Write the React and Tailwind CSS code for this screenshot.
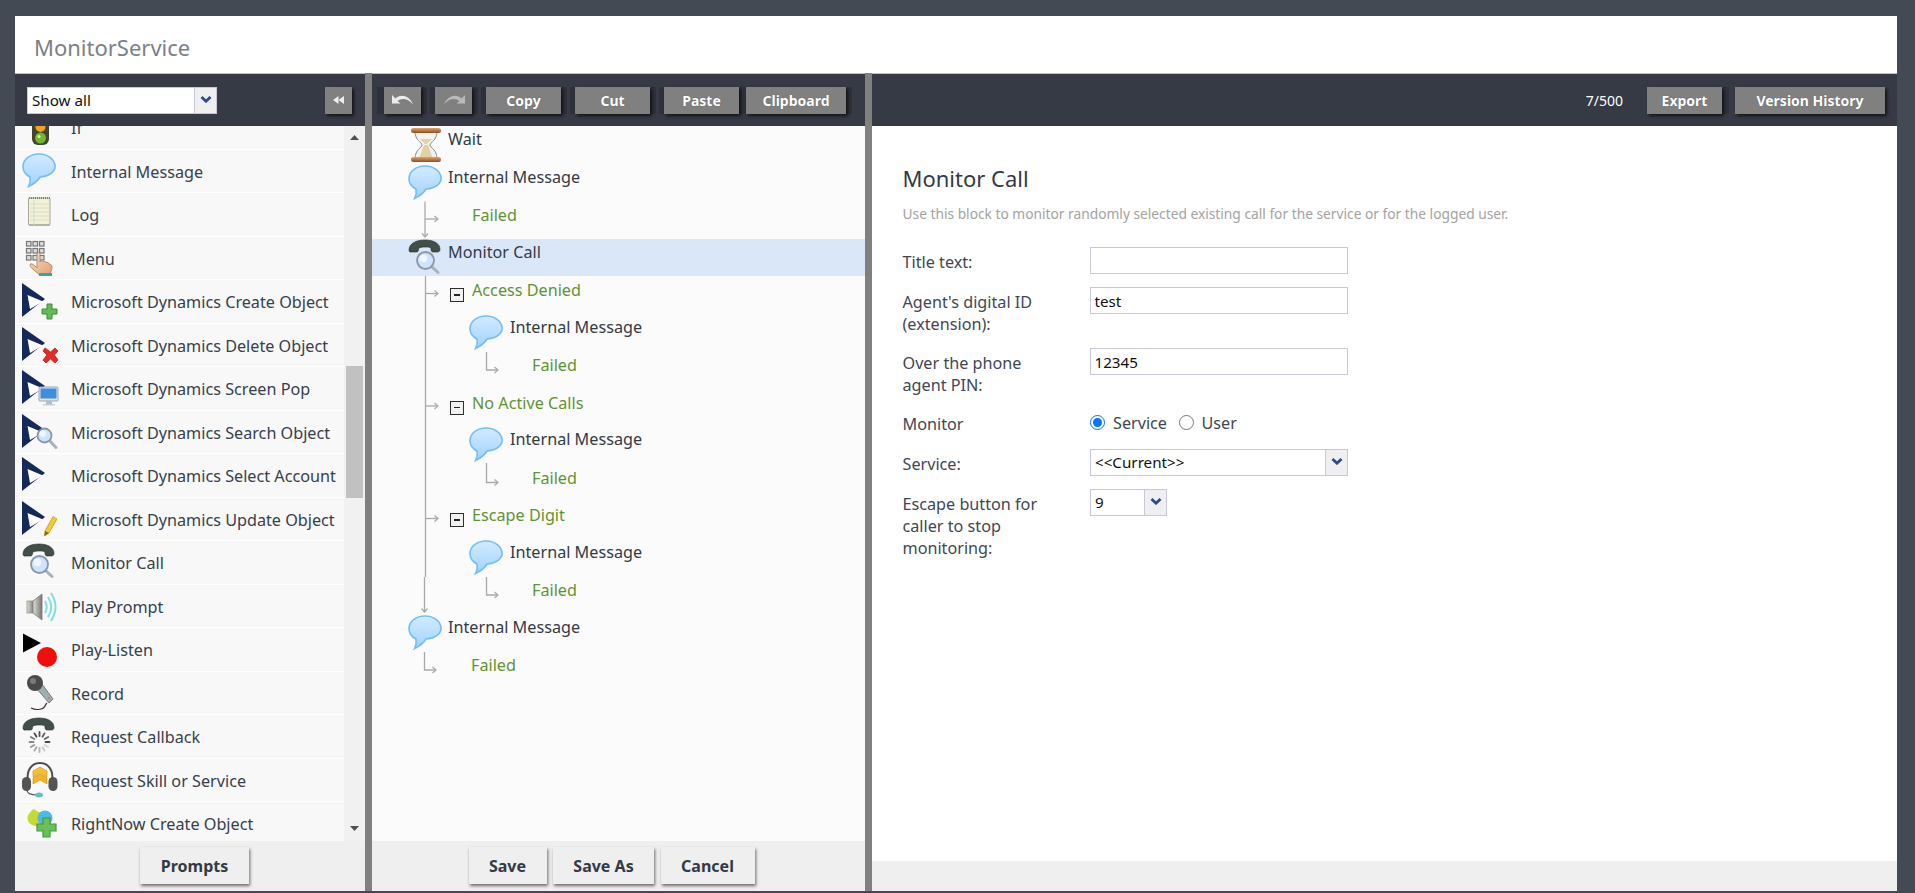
import React from "react";

const Defs = () => (
  <svg width="0" height="0" className="absolute">
    <defs>
      <linearGradient id="bub" x1="0" y1="0" x2="0" y2="1">
        <stop offset="0" stopColor="#d3ebff" />
        <stop offset="1" stopColor="#9fd3ff" />
      </linearGradient>
      <linearGradient id="skin" x1="0" y1="0" x2="1" y2="1">
        <stop offset="0" stopColor="#f8dcc0" />
        <stop offset="1" stopColor="#dda37a" />
      </linearGradient>
      <linearGradient id="brown" x1="0" y1="0" x2="0" y2="1">
        <stop offset="0" stopColor="#e0a26a" />
        <stop offset="1" stopColor="#8f4f1f" />
      </linearGradient>
      <linearGradient id="spk" x1="0" y1="0" x2="1" y2="0">
        <stop offset="0" stopColor="#e0e0da" />
        <stop offset="1" stopColor="#76766f" />
      </linearGradient>
    </defs>
  </svg>
);

const Box = ({ children, className = "" }) => (
  <svg viewBox="0 0 36 36" className={`w-[36px] h-[36px] shrink-0 overflow-visible ${className}`}>{children}</svg>
);

const BubbleShape = () => (
  <>
    <path d="M17 1C8 1 1 6.500 1 13.600c0 4.600 2.800 8.400 7 10.400 .6 3 .2 6-1.400 9.500 5-2.500 9-5.500 11.500-9.500 8.500-.3 15-5.300 15-10.400C33 6.500 26 1 17 1Z" fill="url(#bub)" stroke="#74bdfb" strokeWidth="1.600" />
  </>
);
const Bubble = () => <Box><BubbleShape /></Box>;

const Lights = () => (
  <Box>
    <rect x="10" y="0" width="17" height="36" rx="6" fill="#45452f" />
    <circle cx="18.500" cy="7" r="5" fill="#c33" />
    <circle cx="18.500" cy="18" r="5" fill="#efa321" />
    <circle cx="18.500" cy="29" r="5.500" fill="#72b52e" />
    <circle cx="17" cy="27.500" r="1.600" fill="#d9f5a8" />
  </Box>
);

const Log = () => (
  <Box>
    <rect x="6.500" y="2" width="21.500" height="27" rx="1" fill="#f3f1d8" stroke="#a9a992" />
    <rect x="7" y="28" width="21" height="2" fill="#b5b5a0" />
    <path d="M7 2h21" stroke="#666" strokeWidth="1.500" strokeDasharray="1 1" />
    <path d="M8 8h19M8 12h19M8 16h19M8 20h19M8 24h19" stroke="#dcdcc0" strokeWidth="1" />
    <path d="M12 4v25" stroke="#c4e0dc" strokeWidth="1" />
  </Box>
);

const Menu = () => (
  <Box>
    {[0, 1, 2].map((r) => [0, 1, 2].map((c) => (
      <rect key={`${r}${c}`} x={4.500 + c * 6.500} y={1.500 + r * 7} width="4.500" height="4.500" fill="#dedede" stroke="#777" strokeWidth="1.200" />
    )))}
    <path d="M15 14c0-2 3-2 3 0v8c1-2 3-1 3 0 1-1 3-.5 3 .5 1-.5 3 0 3 1.500 1 0 3 1 3 2.500 0 3-1 6-3 8H17c-3-3-8-6-9-9-.5-2 2-2 3-1l4 3Z" fill="url(#skin)" stroke="#b37b55" strokeWidth=".8" />
    <rect x="17" y="33" width="13" height="3" fill="#3aa5a0" />
  </Box>
);

const Dyn = () => (
  <>
    <path d="M0 0 23 16 0 34Z" fill="#14285a" />
    <path d="M5.500 12 21 18.500 8 26Z" fill="#fff" />
  </>
);

const Magnifier = ({ cx, cy, r, lx, ly }) => (
  <>
    <path d={`M${cx + r * 0.7} ${cy + r * 0.7}L${lx} ${ly}`} stroke="#a9b2ba" strokeWidth="3" strokeLinecap="round" />
    <circle cx={cx} cy={cy} r={r} fill="#cfe4f8" stroke="#8698aa" strokeWidth="1.800" />
    <circle cx={cx - r * 0.25} cy={cy - r * 0.25} r={r * 0.45} fill="#eef7ff" />
  </>
);

const DynCreate = () => (
  <Box><Dyn /><path d="M25 21h5v5h5v5h-5v5h-5v-5h-5v-5h5Z" fill="#63bb55" stroke="#3d8a37" strokeWidth="1" /></Box>
);
const DynDelete = () => (
  <Box><Dyn /><path d="M23 21 28.500 25 33 21 36 24 32.500 28 36 33 33 36 28.500 32 24 36 21 33 25 28 21 24Z" fill="#e32b2b" stroke="#b81f1f" strokeWidth=".8" /></Box>
);
const DynScreen = () => (
  <Box>
    <Dyn />
    <rect x="17" y="17" width="19" height="14" rx="1" fill="#dde3e8" stroke="#9ea7ad" />
    <rect x="18.500" y="18.500" width="16" height="10" fill="#3d8ee0" />
    <rect x="24" y="31" width="6" height="3" fill="#b6bcc1" />
    <rect x="21" y="34" width="12" height="1.500" fill="#c9ced2" />
  </Box>
);
const DynSearch = () => (<Box><Dyn /><Magnifier cx={22.500} cy={21.500} r={7} lx={34} ly={33.500} /></Box>);
const DynSelect = () => (<Box><Dyn /></Box>);
const DynUpdate = () => (
  <Box>
    <Dyn />
    <path d="M31 15.500 35 18 27 32 22.500 35 23 30Z" fill="#f0cb34" stroke="#c79e1e" strokeWidth=".8" />
    <path d="M23 30 22.500 35 27 32Z" fill="#7a6a3a" />
  </Box>
);

const Handset = () => (
  <path d="M1 10C1 3 9 0 17 0s15 3 15 9.500c0 1.500-1 2.500-2.500 2.500H25c-1.500 0-2-1-2-3 0-1.500-1-2-6-2s-6.500 1-6.500 2.500c0 2-1 2.500-2.500 2.500H3.500C2 12.500 1 11.500 1 10Z" fill="#414f48" stroke="#232b27" strokeWidth=".6" />
);

const MonitorIcon = () => (
  <Box>
    <Handset />
    <Magnifier cx={17.500} cy={20.500} r={8.500} lx={30} ly={32.500} />
  </Box>
);

const Prompt = () => (
  <Box>
    <rect x="5" y="13" width="7" height="12" fill="url(#spk)" stroke="#8a8a82" strokeWidth=".7" />
    <path d="M11 13 20 6V32L11 25Z" fill="url(#spk)" stroke="#777" strokeWidth=".8" />
    <path d="M23 13q3.500 6 0 12M26 9q6.500 10 0 20M29 5q9 14 0 28" fill="none" stroke="#86dde0" strokeWidth="2" />
  </Box>
);

const PlayListen = () => (
  <Box>
    <path d="M1 2.500 19 12 1 21.500Z" fill="#000" />
    <circle cx="25" cy="26" r="10" fill="#f40d0d" />
  </Box>
);

const Record = () => (
  <Box>
    <path d="M9 33c6 3 13 1 14-2 .4-1 1-2 2-3" fill="none" stroke="#333" strokeWidth="1.200" />
    <path d="M14 13 20 9 31 24 27 28Z" fill="#9db0ad" stroke="#667" strokeWidth=".8" />
    <circle cx="27" cy="23" r="1" fill="#d8803a" />
    <circle cx="13" cy="8" r="8" fill="#4a4a4a" />
    <circle cx="11" cy="6" r="3" fill="#7b7b7b" />
  </Box>
);

const Callback = () => (
  <Box>
    <Handset />
    {[...Array(12)].map((_, i) => {
      const a = (i * Math.PI) / 6;
      const cx = 17.500, cy = 24;
      return <path key={i} d={`M${cx + Math.cos(a) * 6} ${cy + Math.sin(a) * 6}L${cx + Math.cos(a) * 10} ${cy + Math.sin(a) * 10}`} stroke={`rgba(40,40,40,${i >= 8 || i === 0 ? 0.85 - (i % 8) * 0.05 : 0.12 + (i % 8) * 0.07})`} strokeWidth="1.800" strokeLinecap="round" />;
    })}
  </Box>
);

const Skill = () => (
  <Box>
    <path d="M6 19C4 8 10 1 18 1s14 7 12 18" fill="none" stroke="#4d4d4d" strokeWidth="2" />
    <path d="M18 5 25 9v6l-7-4-7 4V9Z" fill="#f5c12e" stroke="#c8901a" strokeWidth=".6" />
    <path d="M18 12 25 16v6l-7-4-7 4v-6Z" fill="#f3b61f" stroke="#c8901a" strokeWidth=".6" />
    <rect x="0" y="15" width="9" height="14" rx="4.500" fill="#545454" />
    <rect x="26.500" y="15" width="9" height="14" rx="4.500" fill="#545454" />
    <path d="M5 28c0 4 5 5 10 5" fill="none" stroke="#555" strokeWidth="1.200" />
    <ellipse cx="17" cy="33" rx="4" ry="2.500" fill="#63bfc7" />
  </Box>
);

const RightNow = () => (
  <Box>
    <path d="M6 0 11 3c3-.5 8 1 8 6 0 6-6 8-10 8s-9-2.500-9-8C0 6 3 2.500 6 0Z" fill="#c4d932" transform="translate(5.500 4)" />
    <circle cx="23" cy="13" r="7.500" fill="#4fb8ea" />
    <path d="M21 13h7v6h6v7h-6v6h-7v-6h-6v-7h6Z" fill="#69c059" stroke="#3f9b3a" strokeWidth="1.200" />
  </Box>
);

const Hourglass = () => (
  <Box>
    <path d="M7 4 C7 14 14 15 14 18 C14 21 7 22 7 32 H29 C29 22 22 21 22 18 C22 15 29 14 29 4Z" fill="#f3f3f0" stroke="#8c8c88" strokeWidth="1" />
    <path d="M16 18h4l4.500 12h-13Z" fill="#e3cfa8" />
    <path d="M12 12h12l-5 5h-2Z" fill="#e3cfa8" />
    <rect x="3" y="1" width="30" height="5" rx="2.500" fill="url(#brown)" />
    <rect x="3" y="30" width="30" height="5" rx="2.500" fill="url(#brown)" />
  </Box>
);

const Chevron = () => (
  <svg viewBox="0 0 12 7" className="w-[12px] h-[7px]">
    <path d="M1.500 1 6 5.200 10.500 1" fill="none" stroke="#2d4a86" strokeWidth="2.800" />
  </svg>
);

const font = "font-['Noto_Sans',sans-serif]";

const items = [
  ["If", Lights],
  ["Internal Message", Bubble],
  ["Log", Log],
  ["Menu", Menu],
  ["Microsoft Dynamics Create Object", DynCreate],
  ["Microsoft Dynamics Delete Object", DynDelete],
  ["Microsoft Dynamics Screen Pop", DynScreen],
  ["Microsoft Dynamics Search Object", DynSearch],
  ["Microsoft Dynamics Select Account", DynSelect],
  ["Microsoft Dynamics Update Object", DynUpdate],
  ["Monitor Call", MonitorIcon],
  ["Play Prompt", Prompt],
  ["Play-Listen", PlayListen],
  ["Record", Record],
  ["Request Callback", Callback],
  ["Request Skill or Service", Skill],
  ["RightNow Create Object", RightNow],
];

const shadow = "shadow-[2px_2px_3px_rgba(0,0,0,0.65)]";

const GrayBtn = ({ w, children }) => (
  <button className={`${w} h-[27px] bg-[#808080] text-white text-[14px] font-bold flex items-center justify-center ${shadow} [text-shadow:0_0_1px_rgba(0,0,0,0.4)]`}>
    {children}
  </button>
);

const Band = ({ className = "", children }) => (
  <div className={`flex h-[27px] bg-[#2e3139] ${className}`}>{children}</div>
);

const LightBtn = ({ w, children }) => (
  <button className={`${w} h-[37px] bg-[#efefef] text-[#333a45] text-[16px] font-bold flex items-center justify-center shadow-[1px_2px_3px_rgba(0,0,0,0.55)]`}>
    {children}
  </button>
);

const Undo = ({ flip }) => (
  <svg viewBox="0 0 24 12" className={`w-[24px] h-[12px] ${flip ? "-scale-x-100" : ""}`}>
    <path d="M1 1V9.500H9.500L6.500 7C11 3.500 17 4.500 22 10.500C19 2.500 10 -1 4.500 4.500Z" fill={flip ? "#b9b9b9" : "#ececec"} />
  </svg>
);

const Connectors = () => {
  const L = "#a9a9a9";
  const right = (x, y) => <path key={`${x}-${y}`} d={`M${x - 3.500} ${y - 3}L${x} ${y}L${x - 3.500} ${y + 3}`} fill="none" stroke={L} strokeWidth="1.200" />;
  const down = (x, y) => <path key={`d${x}-${y}`} d={`M${x - 3} ${y - 3.500}L${x} ${y}L${x + 3} ${y - 3.500}`} fill="none" stroke={L} strokeWidth="1.200" />;
  return (
    <svg className="absolute left-0 top-0 w-[493px] h-[715px] pointer-events-none" viewBox="0 0 493 715">
      <g stroke={L} strokeWidth="1.300" fill="none">
        <path d="M53 75.500V110.500" /><path d="M53 93H65" />
        <path d="M53.500 150V451" /><path d="M52.500 451V485.500" />
        <path d="M53.500 167.500H65" /><path d="M53.500 280H65" /><path d="M53.500 392.500H65" />
        <path d="M114.500 226V244H125" /><path d="M114.500 337V356.500H125" /><path d="M114.500 451V469H125" />
        <path d="M52.500 526V544H63" />
      </g>
      {down(53, 111)}
      {down(52.500, 486)}
      {right(66, 93)}{right(66, 167.500)}{right(66, 280)}{right(66, 392.500)}
      {right(126, 244)}{right(126, 356.500)}{right(126, 469)}{right(64, 544)}
    </svg>
  );
};

const Minus = () => (
  <div className="w-[14px] h-[14px] mt-[12px] mr-[8px] border-[1.500px] border-[#2d2d2d] bg-[#f1f1f1] flex items-center justify-center shrink-0">
    <div className="w-[6px] h-[1.500px] bg-[#222]" />
  </div>
);

const rowH = "h-[37.500px]";
const Node = ({ Icon, text, nested, selected }) => (
  <div className={`${rowH} flex items-start ${nested ? "pl-[97px]" : "pl-[36px]"} ${selected ? "bg-[#d9e7f9]" : ""}`}>
    <div className="mt-[1px]"><Icon /></div>
    <div className={`leading-[28px] -mt-[1px] text-[#333a45] ${nested ? "ml-[5px]" : "ml-[4px]"}`}>{text}</div>
  </div>
);
const Branch = ({ text, pl, minus }) => (
  <div className={`${rowH} flex items-start ${pl}`}>
    {minus && <Minus />}
    <div className="leading-[28px] text-[#5f9433]">{text}</div>
  </div>
);

const Field = ({ label, children }) => (
  <div className="flex pb-[13px]">
    <div className="w-[187.500px] pt-[4px] leading-[22px] text-[#3f4753] shrink-0 pr-[30px]">{label}</div>
    {children}
  </div>
);

const Input = ({ value }) => (
  <input readOnly value={value} className="w-[258px] h-[27px] border border-[#c8c8da] px-[3.500px] text-[15.200px] text-[#111] bg-white outline-none" />
);

const Select = ({ w, text }) => (
  <div className={`${w} h-[27px] border border-[#c8c8da] flex bg-white shrink-0`}>
    <div className="flex-1 px-[4px] leading-[25px] text-[#111] text-[15.200px]">{text}</div>
    <div className="w-[22px] bg-[#efeff1] border-l border-[#c8c8da] flex items-center justify-center pb-[2px]"><Chevron /></div>
  </div>
);

export default function App() {
  return (
    <div className={`${font} h-[893px] w-full bg-[#434a54] pt-[16px] pb-[2px] pl-[15px] pr-[18px] text-[16.200px] overflow-hidden`}>
      <Defs />
      <div className="h-full flex flex-col bg-white">
        <div className="h-[58px] shrink-0 border-b border-[#c0c0c0] pl-[19px] pt-[16px] text-[22px] leading-[30px] text-[#7b8086]">MonitorService</div>
        <div className="flex-1 flex min-h-0">
          {/* left */}
          <div className="w-[350px] flex flex-col shrink-0">
            <div className="h-[52px] bg-[#363a44] flex items-center pl-[12px] pr-[13px] justify-between shrink-0">
              <Select w="w-[190px]" text="Show all" />
              <button className={`w-[27px] h-[27px] bg-[#808080] flex items-center justify-center ${shadow}`}>
                <svg viewBox="0 0 11 8" className="w-[11px] h-[8px]"><path d="M5.500 0V8L0 4ZM11 0V8L5.500 4Z" fill="#eee" /></svg>
              </button>
            </div>
            <div className="flex-1 flex min-h-0 bg-[#f8f8f8]">
              <div className="flex-1 overflow-hidden">
                <div className="-mt-[20px]">
                  {items.map(([t, I]) => (
                    <div key={t} className="h-[43.500px] border-b border-white flex items-center pl-[7px] gap-[13px] text-[#37404c]">
                      <I />
                      <span className="mt-[2px]">{t}</span>
                    </div>
                  ))}
                </div>
              </div>
              <div className="w-[21px] shrink-0 bg-[#f1f1f1] flex flex-col items-center">
                <svg viewBox="0 0 9 5" className="w-[9px] h-[5px] mt-[9px] shrink-0"><path d="M0 5 4.500 0 9 5Z" fill="#505050" /></svg>
                <div className="w-[17px] h-[132px] bg-[#c1c1c1] mt-[226px] shrink-0" />
                <svg viewBox="0 0 9 5" className="w-[9px] h-[5px] mt-auto mb-[10px] shrink-0"><path d="M0 0 4.500 5 9 0Z" fill="#505050" /></svg>
              </div>
            </div>
            <div className="h-[50px] bg-[#efefef] flex justify-center pt-[6px] pl-[9px] shrink-0">
              <LightBtn w="w-[109px]">Prompts</LightBtn>
            </div>
          </div>
          <div className="w-[7px] bg-[#808080] shrink-0 -mt-px" />
          {/* middle */}
          <div className="w-[493px] flex flex-col shrink-0">
            <div className="h-[52px] bg-[#363a44] flex items-center pl-[5px] gap-[3px] shrink-0">
              <Band className="pl-[7px] pr-[6px]"><GrayBtn w="w-[37px]"><Undo /></GrayBtn></Band>
              <Band className="pl-[5px] pr-[6px]"><GrayBtn w="w-[37px]"><Undo flip /></GrayBtn></Band>
              <Band className="pl-[5px] pr-[6px]"><GrayBtn w="w-[75px]">Copy</GrayBtn></Band>
              <Band className="pl-[5px] pr-[6px]"><GrayBtn w="w-[75px]">Cut</GrayBtn></Band>
              <Band className="pl-[5px] pr-[6px] gap-[7px]"><GrayBtn w="w-[75px]">Paste</GrayBtn><GrayBtn w="w-[100px]">Clipboard</GrayBtn></Band>
            </div>
            <div className="flex-1 bg-[#fbfbfb] relative overflow-hidden min-h-0">
              <Node Icon={Hourglass} text="Wait" />
              <Node Icon={Bubble} text="Internal Message" />
              <Branch text="Failed" pl="pl-[100px]" />
              <Node Icon={MonitorIcon} text="Monitor Call" selected />
              <Branch text="Access Denied" pl="pl-[78px]" minus />
              <Node Icon={Bubble} text="Internal Message" nested />
              <Branch text="Failed" pl="pl-[160px]" />
              <Branch text="No Active Calls" pl="pl-[78px]" minus />
              <Node Icon={Bubble} text="Internal Message" nested />
              <Branch text="Failed" pl="pl-[160px]" />
              <Branch text="Escape Digit" pl="pl-[78px]" minus />
              <Node Icon={Bubble} text="Internal Message" nested />
              <Branch text="Failed" pl="pl-[160px]" />
              <Node Icon={Bubble} text="Internal Message" />
              <Branch text="Failed" pl="pl-[99px]" />
              <Connectors />
            </div>
            <div className="h-[50px] bg-[#efefef] flex justify-center pt-[6px] pr-[14px] gap-[6.500px] shrink-0">
              <LightBtn w="w-[78px]">Save</LightBtn>
              <LightBtn w="w-[101px]">Save As</LightBtn>
              <LightBtn w="w-[94px]">Cancel</LightBtn>
            </div>
          </div>
          <div className="w-[7px] bg-[#808080] shrink-0 -mt-px" />
          {/* right */}
          <div className="flex-1 flex flex-col min-w-0">
            <div className="h-[52px] bg-[#363a44] flex items-center justify-end pr-[12px] shrink-0">
              <span className="text-[14px] text-white mr-[24px]">7/500</span>
              <Band className="pr-[7px]"><GrayBtn w="w-[75px]">Export</GrayBtn></Band>
              <div className="w-[6px]" />
              <GrayBtn w="w-[150px]">Version History</GrayBtn>
            </div>
            <div className="flex-1 bg-white pl-[30.500px] pt-[37px] min-h-0">
              <div className="text-[22px] leading-[30px] text-[#333a45]">Monitor Call</div>
              <div className="text-[13.750px] leading-[20px] text-[#a3a3a3] mt-[11px]">Use this block to monitor randomly selected existing call for the service or for the logged user.</div>
              <div className="mt-[23px]">
                <Field label="Title text:"><Input value="" /></Field>
                <Field label="Agent's digital ID (extension):"><Input value="test" /></Field>
                <Field label="Over the phone agent PIN:"><Input value="12345" /></Field>
                <Field label="Monitor">
                  <div className="h-[27px] flex items-center text-[#3f4753]">
                    <input type="radio" name="m" defaultChecked className="w-[15px] h-[15px] m-0 accent-[#0075ff]" />
                    <span className="ml-[8px] mt-[1px]">Service</span>
                    <input type="radio" name="m" className="w-[15px] h-[15px] m-0 ml-[11.500px] accent-[#0075ff]" />
                    <span className="ml-[8px] mt-[1px]">User</span>
                  </div>
                </Field>
                <Field label="Service:"><Select w="w-[258px]" text="<<Current>>" /></Field>
                <Field label="Escape button for caller to stop monitoring:"><Select w="w-[77px]" text="9" /></Field>
              </div>
            </div>
            <div className="h-[30px] bg-[#efefef] shrink-0" />
          </div>
        </div>
      </div>
    </div>
  );
}
